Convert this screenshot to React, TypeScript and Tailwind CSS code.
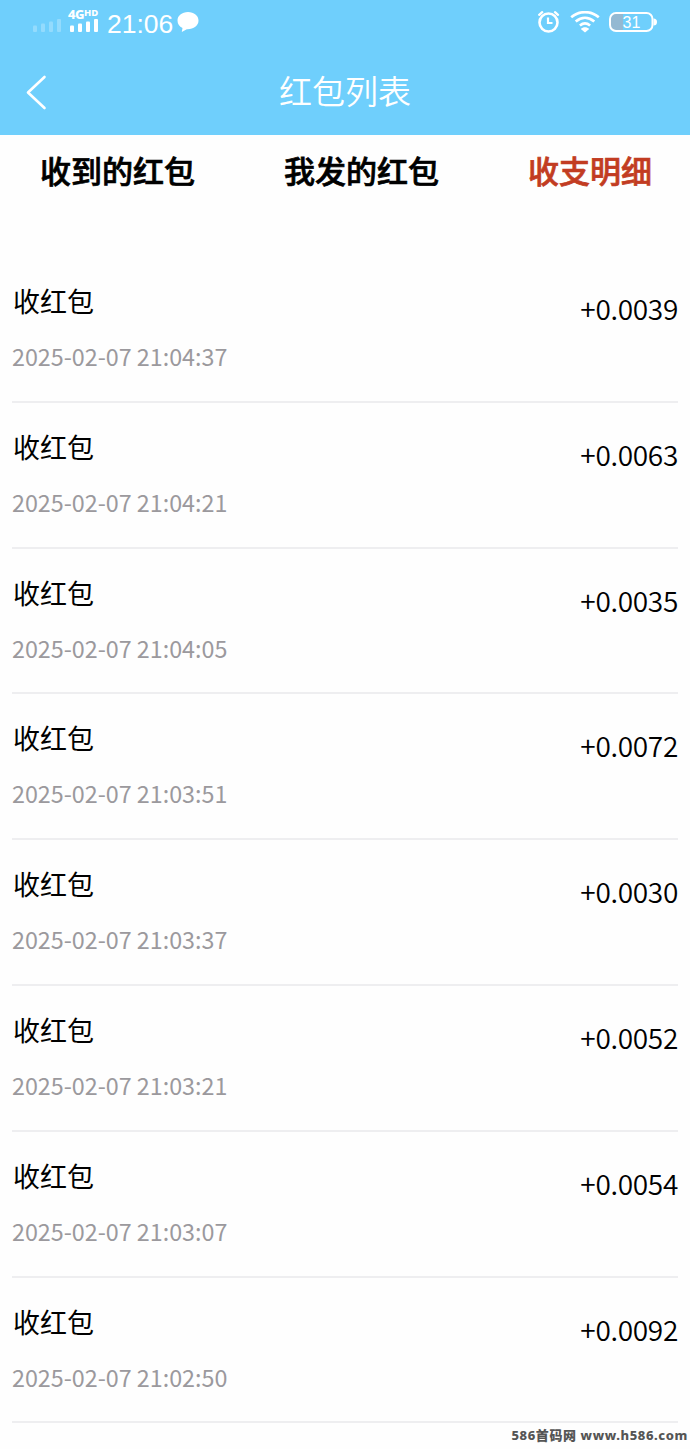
const tabs = [
  { id: "received", label: "收到的红包" },
  { id: "sent", label: "我发的红包" },
  { id: "detail", label: "收支明细" },
];

const records = [
  { time: "2025-02-07 21:04:37", amount: "+0.0039" },
  { time: "2025-02-07 21:04:21", amount: "+0.0063" },
  { time: "2025-02-07 21:04:05", amount: "+0.0035" },
  { time: "2025-02-07 21:03:51", amount: "+0.0072" },
  { time: "2025-02-07 21:03:37", amount: "+0.0030" },
  { time: "2025-02-07 21:03:21", amount: "+0.0052" },
  { time: "2025-02-07 21:03:07", amount: "+0.0054" },
  { time: "2025-02-07 21:02:50", amount: "+0.0092" },
];

function SignalBars({ className }: { className: string }) {
  return (
    <svg width="28" height="13" viewBox="0 0 28 13" fill="currentColor" className={className}>
      <rect x="0" y="6.5" width="4" height="6.5" rx="1" />
      <rect x="8" y="4.5" width="4" height="8.5" rx="1" />
      <rect x="16" y="2.5" width="4" height="10.5" rx="1" />
      <rect x="24" y="0" width="4" height="13" rx="1" />
    </svg>
  );
}

function StatusBar() {
  return (
    <div className="flex h-12 items-start justify-between text-white">
      <div className="flex items-start pl-[33px]">
        <SignalBars className="mt-[19px] text-white/25" />
        <div className="ml-[7px] flex w-8 flex-col pt-2">
          <div className="flex h-[11px] items-start font-['Noto_Sans'] font-extrabold leading-none">
            <span className="text-[13px] leading-[13px] tracking-[-0.5px]">4G</span>
            <span className="text-[9.5px] leading-[9px]">HD</span>
          </div>
          <SignalBars className="ml-[2px]" />
        </div>
        <span className="ml-[7px] mt-[9px] font-['Liberation_Sans'] text-[26.5px] leading-[30px]">21:06</span>
        <svg width="22" height="22" viewBox="0 0 22 22" fill="currentColor" className="ml-1 mt-[11px]">
          <path d="M11 1C5 1 .5 4.6.5 9.5c0 3.4 1.9 6 5 7.4l-.7 4.1 5-2.8c6.5.3 11.7-3.2 11.7-8.7C21.5 4.6 17 1 11 1Z" />
        </svg>
      </div>

      <div className="flex items-start pr-[33px]">
        <svg width="24" height="24" viewBox="0 0 24 24" fill="none" stroke="currentColor" className="mt-[10px]">
          <circle cx="10.5" cy="12.5" r="9" strokeWidth="2.6" />
          <path d="M10 7.5V13h4.5" strokeWidth="2.2" />
          <path d="M1.2 4.8 4.2 2.2M17 2.2l3 2.6" strokeWidth="2.3" strokeLinecap="round" />
        </svg>
        <svg width="30" height="22" viewBox="0 0 30 22" fill="none" stroke="currentColor" strokeWidth="2.7" className="ml-[8px] mt-[11px]">
          <path d="M1.2 6.2C9.3-.5 20.7-.5 28.8 6.2M5.7 10.5C11.5 5.6 18.5 5.6 24.3 10.5M9.9 14.5c3.2-2.6 7-2.6 10.2 0" />
          <path d="M15 21.5 10.8 18C13 15.8 17 15.8 19.2 18Z" fill="currentColor" stroke="none" />
        </svg>
        <svg width="48" height="22" viewBox="0 0 48 22" className="ml-[9px] mt-[11px]">
          <path d="M7 2.5h7v17H7a5 5 0 0 1-5-5v-7a5 5 0 0 1 5-5Z" fill="#94b9d2" />
          <rect x="1" y="2" width="42.5" height="18" rx="6" fill="none" stroke="currentColor" strokeWidth="2" />
          <path d="M44.5 7.5a3.5 3.5 0 0 1 0 7Z" fill="currentColor" />
          <text x="22.5" y="17" textAnchor="middle" fill="currentColor" className="font-['Liberation_Sans'] text-[16px]">31</text>
        </svg>
      </div>
    </div>
  );
}

export default function App() {
  return (
    <div className="min-h-[1449px] w-full overflow-hidden bg-[#fefefe] font-['Noto_Sans_CJK_SC',sans-serif] text-black">
      <header className="h-[135px] bg-[#6fcffc]">
        <StatusBar />
        <div className="grid h-[87px] grid-cols-[60px_1fr_60px] items-center text-white">
          <button className="pl-6" aria-label="返回">
            <svg width="24" height="36" viewBox="0 0 24 36" fill="none" stroke="currentColor" strokeWidth="2.6" strokeLinecap="round" strokeLinejoin="round">
              <path d="M20.5 3 4 18.5 20.5 34" />
            </svg>
          </button>
          <h1 className="pb-[3px] text-center text-[33px] font-[350] leading-[48px]">红包列表</h1>
        </div>
      </header>

      {/* Tabs */}
      <nav className="flex h-[121px] items-start justify-between pl-[40px] pr-[38px] pt-[12px]">
        {tabs.map((tab) => (
          <button
            key={tab.id}
            className={`text-[31px] font-medium leading-[46px] [-webkit-text-stroke:0.7px_currentColor] ${tab.id === "detail" ? "text-[#c23c22]" : "text-black"}`}
          >
            {tab.label}
          </button>
        ))}
      </nav>

      {/* Records */}
      <ul className="px-3 pt-px">
        {records.map((record) => (
          <li key={record.time} className="flex h-[145.8px] justify-between border-b-2 border-[#eeeef0]">
            <div className="pt-6">
              <p className="pl-px text-[27px] leading-10">收红包</p>
              <p className="mt-[15px] text-[23.3px] leading-10 text-[#9b999d]">{record.time}</p>
            </div>
            <span className="pt-[31px] text-[28px] font-[350] leading-10 tracking-[-0.3px]">{record.amount}</span>
          </li>
        ))}
      </ul>

      <footer className="flex justify-end pr-[2px] font-['Noto_Sans','Noto_Sans_CJK_SC',sans-serif] text-[13px] font-extrabold leading-[24px] tracking-[0.6px] text-[#555]">
        586首码网 www.h586.com
      </footer>
    </div>
  );
}
